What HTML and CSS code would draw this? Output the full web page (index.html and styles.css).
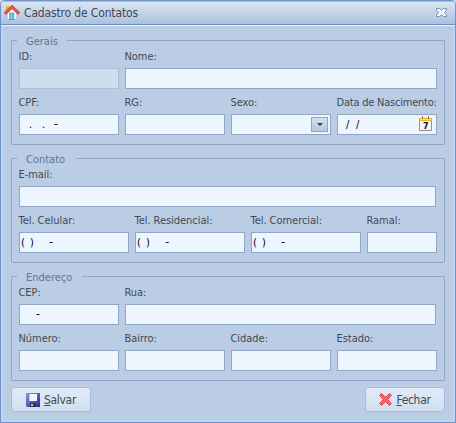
FILE: index.html
```html
<!DOCTYPE html>
<html lang="pt-BR">
<head>
<meta charset="utf-8">
<title>Cadastro de Contatos</title>
<link rel="stylesheet" href="styles.css">
</head>
<body>
<main class="window">
  <header class="titlebar">
    <svg class="home" width="16" height="16" viewBox="0 0 16 16">
      <path d="M2 1h3v5H2z" fill="#efb43c"/>
      <path d="M3 8l5-5 5 5v6.500H3z" fill="#fbfcff" stroke="#8ea2bd" stroke-width=".7"/>
      <path d="M5.500 8h4.500v6.500H5.500z" fill="#66c4ef" stroke="#378ac0" stroke-width=".6"/>
      <path d="M1 8.700l7-6.800 7 6.800" fill="none" stroke="#b5402c" stroke-width="3"/>
      <path d="M1.400 8.100l6.600-6.300 6.600 6.300" fill="none" stroke="#f0592f" stroke-width="1.900"/>
    </svg>
    <h1 class="title">Cadastro de Contatos</h1>
    <svg class="close" width="11" height="9" viewBox="0 0 11 9">
      <path d="M.5.5h3l2 1.700 2-1.700h3v2L8.200 4.500l2.300 2v2h-3l-2-1.700-2 1.700h-3v-2l2.300-2L.5 2.500z" fill="#f1f7fd" stroke="#7295b5"/>
    </svg>
  </header>

  <form class="content">
    <section class="group">
      <h2 class="legend legend-gerais">Gerais</h2>
      <div class="row">
        <div class="field"><span class="label">ID:</span><div class="input disabled"></div></div>
        <div class="field span3"><span class="label">Nome:</span><div class="input"></div></div>
      </div>
      <div class="row">
        <div class="field"><span class="label">CPF:</span><div class="input cpf"><span>.</span><span>.</span><span class="dash">-</span></div></div>
        <div class="field"><span class="label">RG:</span><div class="input"></div></div>
        <div class="field"><span class="label">Sexo:</span><div class="input select"><span class="drop"></span></div></div>
        <div class="field"><span class="label birth">Data de Nascimento:</span>
          <div class="input date"><span>/</span><span>/</span>
            <svg class="calendar" width="13" height="15" viewBox="0 0 13 15">
              <path d="M.5 2.500h12v12H.5z" fill="#f4f4f3" stroke="#96958e"/>
              <path d="M0 2h13v3H0z" fill="#eeb51e"/>
              <path d="M1 3h11v1H1z" fill="#ffdf65"/>
              <path d="M3.500 0v3M9.500 0v3" stroke="#77766b"/>
              <text x="4" y="12.500" class="day">7</text>
            </svg>
          </div>
        </div>
      </div>
    </section>

    <section class="group">
      <h2 class="legend legend-contato">Contato</h2>
      <div class="row">
        <div class="field span4 short"><span class="label">E-mail:</span><div class="input"></div></div>
      </div>
      <div class="row phones">
        <div class="field"><span class="label">Tel. Celular:</span><div class="input phone"><span>(</span><span>)</span><span class="dash">-</span></div></div>
        <div class="field"><span class="label">Tel. Residencial:</span><div class="input phone"><span>(</span><span>)</span><span class="dash">-</span></div></div>
        <div class="field"><span class="label">Tel. Comercial:</span><div class="input phone"><span>(</span><span>)</span><span class="dash">-</span></div></div>
        <div class="field"><span class="label">Ramal:</span><div class="input"></div></div>
      </div>
    </section>

    <section class="group">
      <h2 class="legend legend-endereco">Endereço</h2>
      <div class="row">
        <div class="field"><span class="label">CEP:</span><div class="input cep"><span class="dash">-</span></div></div>
        <div class="field span3 short"><span class="label">Rua:</span><div class="input"></div></div>
      </div>
      <div class="row">
        <div class="field"><span class="label">Número:</span><div class="input"></div></div>
        <div class="field"><span class="label">Bairro:</span><div class="input"></div></div>
        <div class="field"><span class="label">Cidade:</span><div class="input"></div></div>
        <div class="field"><span class="label">Estado:</span><div class="input"></div></div>
      </div>
    </section>

    <footer class="actions">
      <button type="button" class="button">
        <svg width="14" height="14" viewBox="0 0 14 14">
          <defs><linearGradient id="disk" x2="1" y2="1"><stop stop-color="#8c91df"/><stop offset="1" stop-color="#292b94"/></linearGradient></defs>
          <path d="M0 0h14v14H1l-1-1z" fill="url(#disk)"/>
          <path d="M3 1h8v7H3z" fill="#eef5ff"/>
          <path d="M3 1h1v7H3z" fill="#b5c8ef"/>
          <path d="M4 10h6v4H4z" fill="#30384f"/>
          <path d="M5 11h2v2H5z" fill="#c4cfbf"/>
        </svg>
        <span class="caption"><u>S</u>alvar</span>
      </button>
      <button type="button" class="button">
        <svg width="13" height="13" viewBox="0 0 13 13">
          <path d="M.7 2.200L2.400.5 6.500 4.200 10.500.5l1.900 1.600L8.700 6.500l3.700 4-1.800 1.900-4.100-3.700-4 3.700-1.900-1.800 3.700-4.100z" fill="#ff6262" stroke="#e73d43"/>
        </svg>
        <span class="caption"><u>F</u>echar</span>
      </button>
    </footer>
  </form>
</main>
</body>
</html>
```
FILE: styles.css
```css
* { box-sizing: border-box; }
body {
  margin: 0;
  background: #c9d9ec;
  font: 11px/14px "DejaVu Sans Condensed", "DejaVu Sans", sans-serif;
  font-stretch: condensed;
  color: #424854;
}
.window {
  width: 456px;
  height: 423px;
  border: 1px solid #7092c6;
  border-radius: 5px 5px 0 0;
  background: #bbcde5;
  box-shadow: inset 2px 0 #c0d4ee, inset -2px 0 #c0d4ee, inset 0 -2px #c0d4ee;
  overflow: hidden;
}
.titlebar {
  display: flex;
  align-items: center;
  height: 24px;
  padding: 0 8px 0 3px;
  background: linear-gradient(#d9e5f3, #adc1dc);
  border-top: 1px solid #a9c1e1;
  border-bottom: 1px solid #6d8dbd;
  box-shadow: 0 1px #eaf2fc;
}
.home { margin-top: -1px; }
.close { margin-top: -1px; }
.title {
  margin: 0 auto 0 4px;
  font-size: 12px;
  font-weight: 400;
  letter-spacing: -.15px;
}
.content { padding: 15px 10px 0 10px; }
.group {
  height: 105px;
  margin-bottom: 13px;
  padding: 0 7px;
  border: 1px solid #91a7c6;
  border-radius: 1px;
}
.legend {
  height: 14px;
  margin: -7px 0 2px -2px;
  padding-left: 9px;
  background: #bbcde5;
  font-size: 11px;
  font-weight: 400;
  line-height: 16px;
  color: #647490;
}
.legend-gerais { width: 50px; }
.legend-contato { width: 59px; }
.legend-endereco { width: 65px; }
.row {
  display: grid;
  grid-template-columns: repeat(4, 100px);
  column-gap: 6px;
  height: 39px;
  margin-bottom: 7px;
}
.phones { grid-template-columns: 110px 110px 110px 70px; }
.span3 { grid-column: span 3; }
.span4 { grid-column: span 4; }
.short { margin-right: 1px; }
.field { min-width: 0; }
.label {
  display: block;
  height: 14px;
  margin-bottom: 4px;
  margin-left: -.5px;
  letter-spacing: -.04px;
  white-space: nowrap;
}
.birth { letter-spacing: -.22px; }
.input {
  display: flex;
  align-items: center;
  height: 21px;
  border: 1px solid #91a7c6;
  background: #edf5ff;
  color: #000;
}
.disabled { background: #cedef1; border-color: #aabfda; }
.cpf { padding-left: 9px; }
.cpf span { width: 13px; }
.cpf .dash, .phone .dash, .cep .dash { margin-top: -2px; transform: scaleX(1.2); }
.phone { padding-left: 1px; }
.phone span { width: 9px; }
.phone .dash { margin-left: 11px; }
.cep { padding-left: 16px; }
.date { padding: 0 4px 0 8px; }
.date span { width: 10px; }
.calendar { margin: -2px 0 0 auto; }
.day { font: bold 8px "DejaVu Sans", sans-serif; fill: #111; }
.select { justify-content: flex-end; padding-right: 2px; }
.drop {
  display: flex;
  align-items: center;
  justify-content: center;
  width: 17px;
  height: 15px;
  border: 1px solid #8ba4c7;
  background: linear-gradient(#d3e0f0, #b4c8e1);
}
.drop::before {
  content: "";
  border: 3px solid transparent;
  border-top-color: #343a44;
  border-bottom: 0;
}
.actions {
  display: flex;
  justify-content: space-between;
  margin-top: -7px;
}
.button {
  display: flex;
  align-items: center;
  justify-content: center;
  gap: 4px;
  width: 80px;
  height: 25px;
  padding: 0;
  border: 1px solid #a9bddb;
  border-radius: 3px;
  background: linear-gradient(#e1ebf8, #cfdfef);
  font: inherit;
  font-size: 12px;
  letter-spacing: -.3px;
  color: #424854;
}
```
